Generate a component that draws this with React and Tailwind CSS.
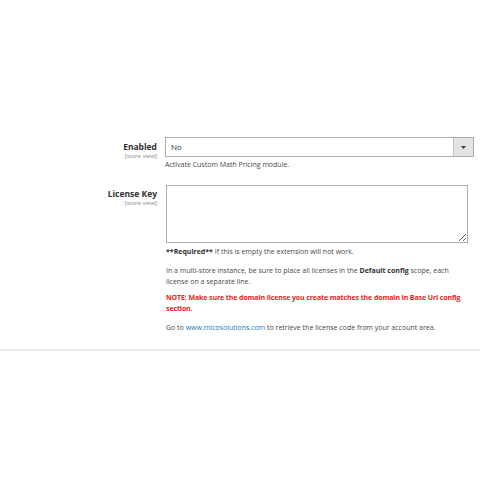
import React from 'react';

function Label({ title }) {
  return (
    <div className="text-right pr-2">
      <div className="text-[8.5px] font-bold text-[#303030] leading-[12px]">{title}</div>
      <div className="text-[6px] text-[#8a8a8a] leading-[7px]">[store view]</div>
    </div>
  );
}

export default function App() {
  return (
    <div
      className="min-h-screen bg-white"
      style={{ fontFamily: '"Open Sans", "Liberation Sans", sans-serif' }}
    >
      <div className="pt-[137px] pb-[16px] border-b-2 border-[#ebebeb]">
        {/* Enabled row */}
        <div className="grid grid-cols-[165px_1fr]">
          <div className="pt-[4px]">
            <Label title="Enabled" />
          </div>
          <div className="pr-[6px]">
            <div className="flex h-[20px] border border-[#adadad] bg-white">
              <div className="flex-1 flex items-center px-[5px] text-[8px] text-[#303030]">No</div>
              <div className="w-[20px] flex items-center justify-center bg-[#e3e3e3] border-l border-[#c2c2c2]">
                <svg width="5" height="3" viewBox="0 0 5 3">
                  <path d="M0 0h5L2.5 3z" fill="#41362f" />
                </svg>
              </div>
            </div>
            <p className="mt-[2px] text-[7px] leading-[11px] text-[#4a4a4a]">
              Activate Custom Math Pricing module.
            </p>
          </div>
        </div>

        {/* License key row */}
        <div className="grid grid-cols-[165px_1fr] mt-[15px]">
          <div className="pt-[3px]">
            <Label title="License Key" />
          </div>
          <div className="pr-[12px] pl-[1px]">
            <textarea className="block w-full h-[58px] border border-[#adadad] bg-white resize-y outline-none" />
            <div className="mt-[3px] text-[7px] leading-[11px] text-[#4a4a4a]">
              <p>
                <span className="font-bold text-[#303030]">**Required**</span> If this is empty the extension will not work.
              </p>
              <p className="mt-[8px]">
                In a multi-store instance, be sure to place all licenses in the{' '}
                <span className="font-bold text-[#303030]">Default config</span> scope, each license on a separate line.
              </p>
              <p className="mt-[5px] font-bold text-[#f01818] tracking-[-0.1px]">
                NOTE: Make sure the domain license you create matches the domain in Base Url config section.
              </p>
              <p className="mt-[8px]">
                Go to <a className="text-[#1979c3]">www.micosolutions.com</a> to retrieve the license code from your account area.
              </p>
            </div>
          </div>
        </div>
      </div>
    </div>
  );
}
